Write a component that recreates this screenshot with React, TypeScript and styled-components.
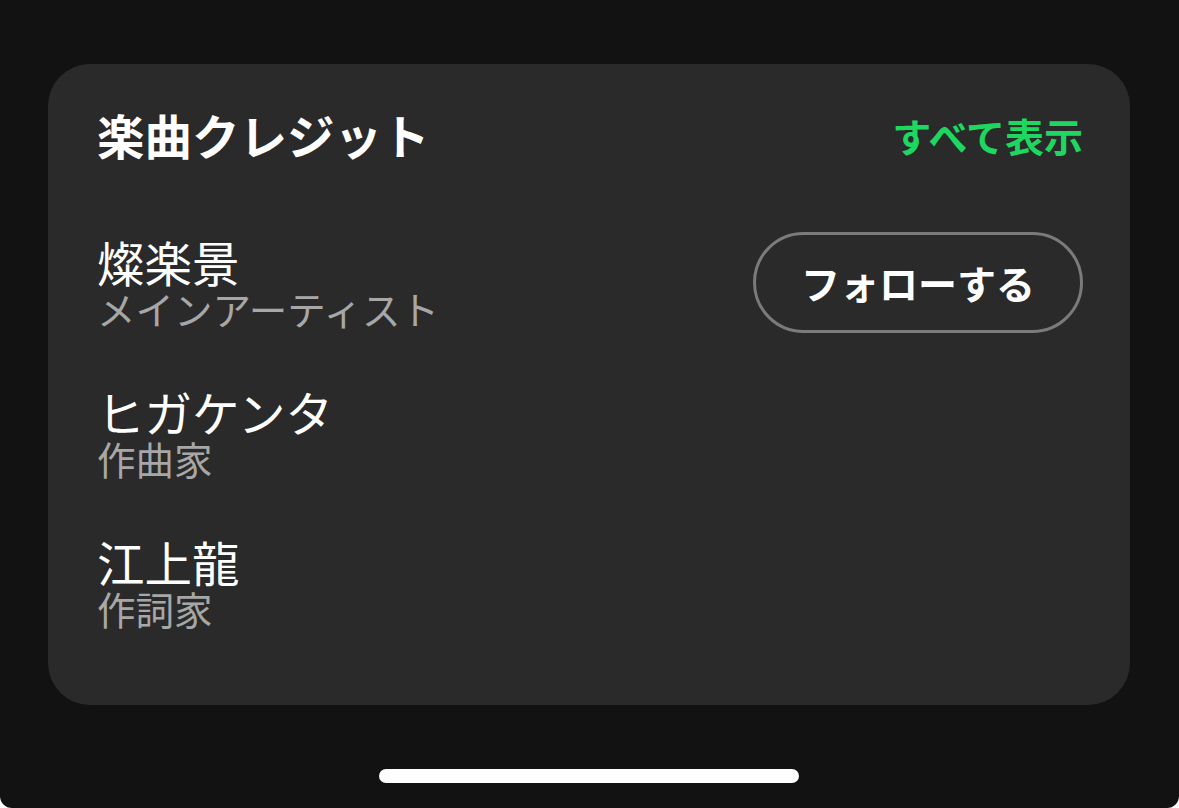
import React from 'react';
import styled, { createGlobalStyle } from 'styled-components';

const GlobalStyle = createGlobalStyle`
  html, body {
    margin: 0;
    padding: 0;
    background: #fff;
  }
  body {
    font-family: 'Noto Sans CJK JP', 'Noto Sans', sans-serif;
    color: #fff;
  }
`;

const Screen = styled.div`
  width: 1179px;
  height: 808px;
  box-sizing: border-box;
  padding: 64px 49px 0 48px;
  display: flex;
  flex-direction: column;
  align-items: center;
  background: #121212;
  border-radius: 0 0 12px 12px;
  overflow: hidden;
`;

const Card = styled.section`
  width: 100%;
  height: 641px;
  box-sizing: border-box;
  padding: 36px 47px 0 49px;
  background: #2a2a2a;
  border-radius: 42px;
  display: flex;
  flex-direction: column;
`;

const Header = styled.div`
  display: flex;
  align-items: center;
  justify-content: space-between;
  height: 70px;
`;

const Title = styled.h2`
  margin: 0;
  font-size: 47.5px;
  font-weight: 700;
  line-height: 1;
  color: #fff;
`;

const ShowAll = styled.a`
  font-size: 39px;
  font-weight: 700;
  line-height: 1;
  color: #1ed760;
  text-decoration: none;
`;

const List = styled.div`
  margin-top: 62px;
  display: flex;
  flex-direction: column;
  gap: 50px;
`;

const Row = styled.div`
  display: flex;
  align-items: center;
  justify-content: space-between;
  height: 100px;
`;

const Person = styled.div`
  display: flex;
  flex-direction: column;
`;

const Name = styled.div`
  font-size: 47.5px;
  font-weight: 400;
  line-height: 52px;
  color: #fff;
`;

const Role = styled.div`
  font-size: 38.5px;
  font-weight: 400;
  line-height: 40px;
  color: #a7a7a7;
`;

const FollowButton = styled.button`
  height: 101px;
  width: 330px;
  padding: 0;
  border: 3px solid #7b7b7b;
  border-radius: 51px;
  background: transparent;
  color: #fff;
  font-family: inherit;
  font-size: 39px;
  font-weight: 700;
  line-height: 1;
  cursor: pointer;
`;

const HomeBar = styled.div`
  margin-top: 64px;
  width: 420px;
  height: 14px;
  border-radius: 7px;
  background: #fff;
`;

type Credit = { name: string; role: string; follow?: boolean };

const credits: Credit[] = [
  { name: '燦楽景', role: 'メインアーティスト', follow: true },
  { name: 'ヒガケンタ', role: '作曲家' },
  { name: '江上龍', role: '作詞家' },
];

export default function App() {
  return (
    <>
      <GlobalStyle />
      <Screen>
        <Card>
          <Header>
            <Title>楽曲クレジット</Title>
            <ShowAll href="#">すべて表示</ShowAll>
          </Header>
          <List>
            {credits.map((c) => (
              <Row key={c.name}>
                <Person>
                  <Name>{c.name}</Name>
                  <Role>{c.role}</Role>
                </Person>
                {c.follow && <FollowButton>フォローする</FollowButton>}
              </Row>
            ))}
          </List>
        </Card>
        <HomeBar />
      </Screen>
    </>
  );
}
